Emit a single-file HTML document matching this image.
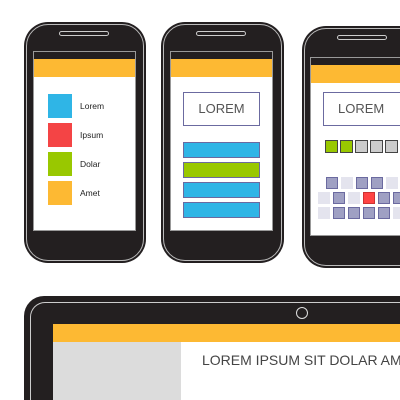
<!DOCTYPE html>
<html style="width:400px;height:400px;overflow:hidden"><head><style>
*{margin:0;padding:0;box-sizing:border-box}
body{width:400px;height:400px;background:#fff;position:relative;overflow:hidden;font-family:"Liberation Sans",sans-serif}
.a{position:absolute}
.ph{position:absolute;background:#231f20;border-radius:24px;}
.ph:after{content:"";position:absolute;inset:2px;border:1px solid #bbb;border-radius:22px}
.spk{position:absolute;height:5px;border:1px solid #ccc;border-radius:3px;background:#231f20}
.scr{position:absolute;background:#fff;border:1px solid #999}
.y{background:#fdb933}
.lbl{position:absolute;font-size:8.5px;color:#222}
.sq{position:absolute;width:13px;height:13px;border:1px solid #444}
.g{position:absolute;width:12px;height:12px}
.d{background:#9fa0c3;border:1px solid #6b6aa0}
.l{background:#e4e4ee}
.r{background:#f44;border:1px solid #c33}
</style></head><body>
<!-- phone 1 -->
<div class="ph" style="left:24px;top:22px;width:122px;height:241px"></div>
<div class="spk" style="left:59px;top:31px;width:50px"></div>
<div class="scr" style="left:33px;top:51px;width:103px;height:180px"></div>
<div class="a" style="left:34px;top:52px;width:101px;height:7px;background:#231f20"></div>
<div class="a y" style="left:34px;top:59px;width:101px;height:18px"></div>
<div class="a" style="left:48px;top:94px;width:24px;height:24px;background:#2fb5e6"></div>
<div class="a" style="left:48px;top:123px;width:24px;height:24px;background:#f44445"></div>
<div class="a" style="left:48px;top:152px;width:24px;height:24px;background:#99c800"></div>
<div class="a" style="left:48px;top:181px;width:24px;height:24px;background:#fdb933"></div>
<div class="lbl" style="left:80px;top:101px">Lorem</div>
<div class="lbl" style="left:80px;top:130px">Ipsum</div>
<div class="lbl" style="left:80px;top:159px">Dolar</div>
<div class="lbl" style="left:80px;top:188px">Amet</div>
<!-- phone 2 -->
<div class="ph" style="left:161px;top:22px;width:123px;height:241px"></div>
<div class="spk" style="left:196px;top:31px;width:50px"></div>
<div class="scr" style="left:170px;top:51px;width:103px;height:180px"></div>
<div class="a" style="left:171px;top:52px;width:101px;height:7px;background:#231f20"></div>
<div class="a y" style="left:171px;top:59px;width:101px;height:18px"></div>
<div class="a" style="left:183px;top:92px;width:77px;height:34px;border:1px solid #6b6aa0;font-size:13px;color:#555;text-align:center;line-height:32px">LOREM</div>
<div class="a" style="left:183px;top:142px;width:77px;height:16px;background:#2fb5e6;border:1px solid #6b6aa0"></div>
<div class="a" style="left:183px;top:162px;width:77px;height:16px;background:#99c800;border:1px solid #6b6aa0"></div>
<div class="a" style="left:183px;top:182px;width:77px;height:16px;background:#2fb5e6;border:1px solid #6b6aa0"></div>
<div class="a" style="left:183px;top:202px;width:77px;height:16px;background:#2fb5e6;border:1px solid #6b6aa0"></div>
<!-- phone 3 -->
<div class="ph" style="left:302px;top:26px;width:130px;height:242px"></div>
<div class="spk" style="left:337px;top:35px;width:50px"></div>
<div class="scr" style="left:310px;top:57px;width:100px;height:179px"></div>
<div class="a" style="left:311px;top:58px;width:89px;height:7px;background:#231f20"></div>
<div class="a y" style="left:311px;top:65px;width:89px;height:18px"></div>
<div class="a" style="left:323px;top:92px;width:90px;height:34px;border:1px solid #6b6aa0;font-size:13px;color:#555;line-height:32px;padding-left:14px">LOREM</div>
<div class="sq" style="left:325px;top:140px;background:#99c800"></div>
<div class="sq" style="left:340px;top:140px;background:#99c800"></div>
<div class="sq" style="left:355px;top:140px;background:#ccc"></div>
<div class="sq" style="left:370px;top:140px;background:#ccc"></div>
<div class="sq" style="left:385px;top:140px;background:#ccc"></div>
<div class="g d" style="left:326px;top:177px"></div><div class="g l" style="left:341px;top:177px"></div><div class="g d" style="left:356px;top:177px"></div><div class="g d" style="left:371px;top:177px"></div><div class="g l" style="left:386px;top:177px"></div>
<div class="g l" style="left:318px;top:192px"></div><div class="g d" style="left:333px;top:192px"></div><div class="g l" style="left:348px;top:192px"></div><div class="g r" style="left:363px;top:192px"></div><div class="g d" style="left:378px;top:192px"></div><div class="g d" style="left:393px;top:192px"></div>
<div class="g l" style="left:318px;top:207px"></div><div class="g d" style="left:333px;top:207px"></div><div class="g d" style="left:348px;top:207px"></div><div class="g d" style="left:363px;top:207px"></div><div class="g d" style="left:378px;top:207px"></div><div class="g l" style="left:393px;top:207px"></div>
<!-- laptop -->
<div class="a" style="left:24px;top:296px;width:376px;height:104px;background:#231f20;border-radius:20px 0 0 0"></div>
<div class="a" style="left:30px;top:302px;width:370px;height:98px;border:1px solid #ccc;border-right:none;border-bottom:none;border-radius:15px 0 0 0"></div>
<div class="a" style="left:296px;top:307px;width:12px;height:12px;border:1.5px solid #ddd;border-radius:50%"></div>
<div class="a" style="left:53px;top:324px;width:347px;height:76px;background:#fff"></div>
<div class="a y" style="left:53px;top:324px;width:347px;height:18px"></div>
<div class="a" style="left:53px;top:342px;width:128px;height:58px;background:#dcdcdc"></div>
<div class="a" style="left:202px;top:352px;font-size:14px;color:#444;white-space:nowrap">LOREM IPSUM SIT DOLAR AMET</div>
</body></html>
